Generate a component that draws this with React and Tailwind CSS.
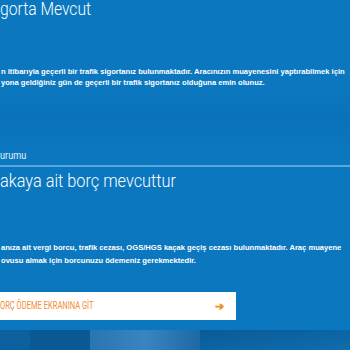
import React from "react";

const cond = { fontFamily: '"Roboto", "DejaVu Sans Condensed", sans-serif' };
const body = "font-['Liberation_Sans',Arial,sans-serif] font-bold text-[7.6px] whitespace-nowrap pl-px";

export default function App() {
  return (
    <div className="w-[350px] h-[350px] overflow-hidden bg-[#0b77bf] text-white flex flex-col">
      {/* trafik sigortası */}
      <section className="flex flex-col">
        <h1 className="text-[18px] leading-[18px] font-light whitespace-nowrap origin-left scale-x-[0.87]" style={cond}>
          gorta Mevcut
        </h1>
        <div className={`mt-[48px] leading-[11px] ${body}`}>
          <p>n itibarıyla geçerli bir trafik sigortanız bulunmaktadır. Aracınızın muayenesini yaptırabilmek için</p>
          <p>yona geldiğiniz gün de geçerli bir trafik sigortanız olduğuna emin olunuz.</p>
        </div>
      </section>

      <div className="h-[62px] bg-gradient-to-b from-[#0b77bf] via-[#0a72b8] to-[#0b77bf]" />

      {/* borç durumu */}
      <section className="flex flex-col">
        <div className="text-[10.5px] leading-[12px] text-[#e3f1fb] origin-left scale-x-[0.87]" style={cond}>urumu</div>
        <div className="mt-[3px] h-[2px] bg-[#58a7de]" />
        <h2 className="mt-[5px] text-[18px] leading-[18px] font-light whitespace-nowrap origin-left scale-x-[0.905]" style={cond}>
          akaya ait borç mevcuttur
        </h2>
        <div className={`mt-[51px] leading-[13px] ${body}`}>
          <p>anıza ait vergi borcu, trafik cezası, OGS/HGS kaçak geçiş cezası bulunmaktadır. Araç muayene</p>
          <p>ovusu almak için borcunuzu ödemeniz gerekmektedir.</p>
        </div>
        <button className="mt-[25px] w-[236px] h-[28px] bg-white flex items-center justify-between pr-[12px]">
          <span className="text-[11px] font-normal text-[#f08d34] uppercase whitespace-nowrap origin-left scale-x-[0.685]" style={cond}>
            ORÇ ÖDEME EKRANINA GİT
          </span>
          <span className="text-[#f08a24] text-[11px] font-bold">➔</span>
        </button>
      </section>

      {/* background photo strip */}
      <div className="mt-[10px] flex-1 flex bg-[#0b5c99]">
        <div className="w-[30px] bg-[#0c609e]" />
        <div className="w-[60px] bg-[#0a5894]" />
        <div className="w-[110px] bg-gradient-to-r from-[#2a74b2] via-[#3a84c2] to-[#1e68a6]" />
        <div className="flex-1 bg-gradient-to-br from-[#0a5b97] to-[#0f6dae]" />
      </div>
    </div>
  );
}
